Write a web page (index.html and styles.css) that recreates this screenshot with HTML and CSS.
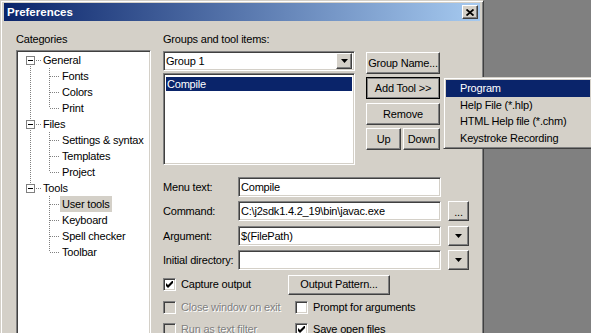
FILE: index.html
```html
<!DOCTYPE html>
<html>
    <head>
        <meta charset="utf-8">
        <title>Preferences</title>
        <link rel="stylesheet" href="styles.css">
    </head>
    <body>
        <div id="desktop">
            <div class="window">
                <div class="titlebar">
                    <span class="title">Preferences</span>
                    <button class="close">
                        <svg width="8" height="7" viewBox="0 0 8 7"><path d="M0.5 0.5L7.5 6.5M7.5 0.5L0.5 6.5" stroke="#000" stroke-width="1.8" fill="none"/></svg>
                    </button>
                </div>

                <div class="content">
                    <div class="cat-col">
                        <p class="label">Categories</p>
                        <div class="tree">
                            <ul class="tree-root">
                                <li>
                                    <div class="node-row"><span class="expander"></span><span class="dash"></span><span class="node-text">General</span></div>
                                    <ul class="kids">
                                        <li><span>Fonts</span></li>
                                        <li><span>Colors</span></li>
                                        <li><span>Print</span></li>
                                    </ul>
                                </li>
                                <li>
                                    <div class="node-row"><span class="expander"></span><span class="dash"></span><span class="node-text">Files</span></div>
                                    <ul class="kids">
                                        <li><span>Settings &amp; syntax</span></li>
                                        <li><span>Templates</span></li>
                                        <li><span>Project</span></li>
                                    </ul>
                                </li>
                                <li>
                                    <div class="node-row"><span class="expander"></span><span class="dash"></span><span class="node-text">Tools</span></div>
                                    <ul class="kids">
                                        <li><span class="selected">User tools</span></li>
                                        <li><span>Keyboard</span></li>
                                        <li><span>Spell checker</span></li>
                                        <li><span>Toolbar</span></li>
                                    </ul>
                                </li>
                            </ul>
                        </div>
                    </div>

                    <div class="main-col">
                        <p class="label">Groups and tool items:</p>
                        <div class="group-area">
                            <div class="lists">
                                <div class="combo">
                                    <span>Group 1</span>
                                    <span class="dd btn-face"><svg width="7" height="4" viewBox="0 0 7 4"><path d="M0 0h7L3.5 4z"/></svg></span>
                                </div>
                                <div class="listbox">
                                    <div class="list-sel">Compile</div>
                                </div>
                            </div>
                            <div class="side-btns">
                                <button class="btn" id="groupName">Group Name...</button>
                                <button class="btn pressed" id="addTool">Add Tool &gt;&gt;</button>
                                <button class="btn" id="remove">Remove</button>
                                <div class="updown">
                                    <button class="btn" id="up">Up</button>
                                    <button class="btn" id="down">Down</button>
                                </div>
                            </div>
                        </div>

                        <div class="fields">
                            <span class="field-label">Menu text:</span>
                            <div class="input">Compile</div>
                            <span></span>

                            <span class="field-label">Command:</span>
                            <div class="input">C:\j2sdk1.4.2_19\bin\javac.exe</div>
                            <button class="btn side dots">...</button>

                            <span class="field-label">Argument:</span>
                            <div class="input">$(FilePath)</div>
                            <button class="btn side"><svg width="7" height="4" viewBox="0 0 7 4"><path d="M0 0h7L3.5 4z"/></svg></button>

                            <span class="field-label">Initial directory:</span>
                            <div class="input"></div>
                            <button class="btn side"><svg width="7" height="4" viewBox="0 0 7 4"><path d="M0 0h7L3.5 4z"/></svg></button>
                        </div>

                        <div class="checks">
                            <div class="check">
                                <span class="box"><svg width="7" height="7" viewBox="0 0 7 7"><path d="M0 2l2 2 5-5v3L2 7 0 5z"/></svg></span>
                                <span class="check-text">Capture output</span>
                            </div>
                            <div><button class="btn" id="outputPattern">Output Pattern...</button></div>

                            <div class="check disabled">
                                <span class="box"></span>
                                <span class="check-text">Close window on exit</span>
                            </div>
                            <div class="check col2">
                                <span class="box"></span>
                                <span class="check-text">Prompt for arguments</span>
                            </div>

                            <div class="check disabled">
                                <span class="box"></span>
                                <span class="check-text">Run as text filter</span>
                            </div>
                            <div class="check col2">
                                <span class="box"><svg width="7" height="7" viewBox="0 0 7 7"><path d="M0 2l2 2 5-5v3L2 7 0 5z"/></svg></span>
                                <span class="check-text">Save open files</span>
                            </div>
                        </div>
                    </div>
                </div>
            </div>

            <div class="menu">
                <div class="menu-item active">Program</div>
                <div class="menu-item">Help File (*.hlp)</div>
                <div class="menu-item">HTML Help file (*.chm)</div>
                <div class="menu-item">Keystroke Recording</div>
            </div>
        </div>
    </body>
</html>
```

FILE: styles.css
```css
* {
    padding: 0;
    margin: 0;
    box-sizing: border-box;
}

body {
    background-color: #808080;
    font-family: "Liberation Sans", Arial, sans-serif;
    font-size: 11px;
    line-height: 13px;
    letter-spacing: -0.2px;
    color: #000;
    overflow: hidden;
}

#desktop {
    position: relative;
    width: 591px;
    height: 333px;
    overflow: hidden;
}

button {
    font: inherit;
    letter-spacing: inherit;
    color: #000;
}

/* raised 3d face, used by buttons and the window frame */
.window,
.btn,
.btn-face,
.close,
.menu {
    background-color: #d4d0c8;
    border: 1px solid;
    border-color: #fff #404040 #404040 #fff;
    box-shadow: inset -1px -1px #808080;
}

.window {
    width: 484px;
    height: 360px;
    padding: 2px 3px;
    border-color: #d4d0c8 #404040 #404040 #d4d0c8;
    box-shadow: inset 1px 1px #fff, inset -1px -1px #808080;
}

.titlebar {
    height: 18px;
    display: flex;
    align-items: center;
    justify-content: space-between;
    padding: 0 2px 0 3px;
    background: linear-gradient(to right, #0a246a, #a6caf0);
}

.title {
    color: #fff;
    font-weight: bold;
    font-size: 11.5px;
    letter-spacing: 0;
}

.close {
    width: 16px;
    height: 14px;
    display: flex;
    align-items: center;
    justify-content: center;
}

.content {
    display: flex;
    padding: 12px 0 0 12px;
}

.label {
    line-height: 13px;
}

/* sunken fields */
.tree,
.combo,
.listbox,
.input,
.box {
    background-color: #fff;
    border: 1px solid;
    border-color: #808080 #fff #fff #808080;
    box-shadow: inset 1px 1px #404040, inset -1px -1px #d4d0c8;
}

/* categories tree */
.cat-col {
    width: 135px;
    margin-right: 12px;
}

.tree {
    margin-top: 4px;
    height: 300px;
    padding: 1px;
}

.tree ul {
    list-style: none;
}

.tree-root {
    background: repeating-linear-gradient(to bottom, #808080 0 1px, transparent 1px 2px) 12px 8px / 1px 128px no-repeat;
}

.node-row {
    display: flex;
    align-items: center;
    height: 16px;
}

.expander {
    width: 9px;
    height: 9px;
    margin-left: 8px;
    border: 1px solid #808080;
    background: linear-gradient(#000, #000) center / 5px 1px no-repeat, #fff;
}

.dash {
    width: 5px;
    height: 1px;
    margin-left: 1px;
    background: repeating-linear-gradient(to right, #808080 0 1px, transparent 1px 2px);
}

.node-text {
    margin-left: 2px;
}

.kids {
    background: repeating-linear-gradient(to bottom, #808080 0 1px, transparent 1px 2px) 31px 0 / 1px calc(100% - 8px) no-repeat;
}

.kids li {
    display: flex;
    height: 16px;
    padding-left: 42px;
    line-height: 16px;
    background: repeating-linear-gradient(to right, #808080 0 1px, transparent 1px 2px) 32px 8px / 9px 1px no-repeat;
}

.kids li span {
    padding: 0 2px;
}

.kids .selected {
    background-color: #d4d0c8;
}

/* groups */
.main-col {
    width: 306px;
}

.group-area {
    display: flex;
    margin-top: 5px;
}

.lists {
    width: 192px;
}

.combo {
    height: 20px;
    display: flex;
    align-items: center;
    justify-content: space-between;
    padding: 2px;
}

.dd {
    width: 16px;
    height: 16px;
    display: flex;
    align-items: center;
    justify-content: center;
}

.listbox {
    margin-top: 2px;
    height: 92px;
    padding: 3px 2px 2px;
}

.list-sel {
    height: 14px;
    padding-left: 1px;
    line-height: 14px;
    background-color: #0a246a;
    color: #fff;
}

.side-btns {
    width: 74px;
    margin-left: 11px;
    display: flex;
    flex-direction: column;
}

.btn {
    height: 22px;
    display: flex;
    align-items: center;
    justify-content: center;
}

#groupName {
    margin-top: 1px;
}

#addTool {
    margin-top: 3px;
}

#remove {
    margin-top: 4px;
}

.pressed {
    border-color: #000;
    box-shadow: inset 1px 1px #808080, inset -1px -1px #808080;
}

.updown {
    display: flex;
    gap: 2px;
    margin-top: 3px;
}

#up {
    width: 35px;
}

#down {
    width: 37px;
}

/* tool fields */
.fields {
    display: grid;
    grid-template-columns: 75px 210px 21px;
    grid-template-rows: 24px 25px 24px 20px;
    align-items: start;
    margin-top: 12px;
}

.field-label {
    line-height: 20px;
}

.input {
    width: 203px;
    height: 20px;
    padding: 0 2px;
    line-height: 18px;
    white-space: nowrap;
}

.side {
    width: 21px;
    height: 20px;
}

.dots {
    align-items: flex-end;
    padding-bottom: 3px;
    line-height: 10px;
}

/* check boxes */
.checks {
    display: grid;
    grid-template-columns: 125px 1fr;
    grid-template-rows: 23px 22px 22px;
    align-items: center;
    margin-top: 3px;
}

.check {
    display: flex;
    align-items: center;
}

.col2 {
    margin-left: 7px;
}

.box {
    width: 13px;
    height: 13px;
    display: flex;
    align-items: center;
    justify-content: center;
}

.check-text {
    margin-left: 5px;
}

.disabled .box {
    background-color: #d4d0c8;
}

.disabled .check-text {
    color: #808080;
    text-shadow: 1px 1px #fff;
}

#outputPattern {
    width: 102px;
    height: 20px;
}

/* popup menu */
.menu {
    position: absolute;
    left: 443px;
    top: 77px;
    width: 150px;
    height: 72px;
    padding: 2px;
    border-color: #d4d0c8 #404040 #404040 #d4d0c8;
    box-shadow: inset 1px 1px #fff, inset -1px -1px #808080;
}

.menu-item {
    height: 16.5px;
    line-height: 16.5px;
    padding-left: 14px;
}

.menu-item.active {
    background-color: #0a246a;
    color: #fff;
}
```
